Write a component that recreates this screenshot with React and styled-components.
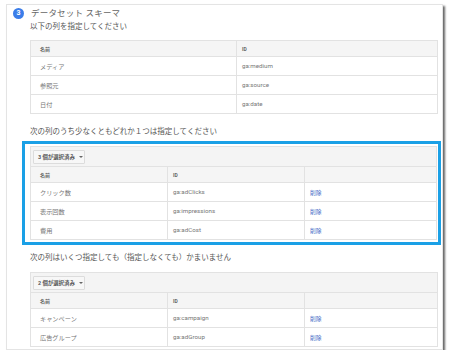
import React from "react";
import styled, { createGlobalStyle } from "styled-components";

const GlobalStyle = createGlobalStyle`
  html, body { margin: 0; padding: 0; background: #ffffff; }
  body { font-family: Roboto, "Noto Sans CJK JP", sans-serif; }
  * { box-sizing: border-box; }
`;

const Card = styled.div`
  margin: 4px 0 0 6px;
  width: 437px;
  background: #fff;
  border: 1px solid #e4e4e4;
  box-shadow: 2px 2px 2px rgba(0, 0, 0, 0.6);
  padding: 2px 4px 2px 6px;
`;

const StepHeader = styled.div`
  display: flex;
  align-items: center;
  gap: 7px;
  height: 12px;
`;

const StepBadge = styled.span`
  width: 11px;
  height: 11px;
  border-radius: 50%;
  background: #3b7de9;
  color: #fff;
  font-size: 7px;
  font-weight: 700;
  display: flex;
  align-items: center;
  justify-content: center;
  line-height: 1;
`;

const StepTitle = styled.span`
  font-size: 8.5px;
  line-height: 12px;
  color: #666;
  letter-spacing: 0.2px;
`;

const Body = styled.div`
  margin-left: 17px;
  display: flex;
  flex-direction: column;
`;

const Instruction = styled.div`
  font-size: 7.5px;
  line-height: 12px;
  color: #555;
  margin-top: ${(p) => p.$mt}px;
`;

const Table = styled.div`
  border: 1px solid #e2e2e2;
  margin-top: ${(p) => p.$mt || 0}px;
  background: #fff;
`;

const Toolbar = styled.div`
  height: 20px;
  background: #f4f4f4;
  border-bottom: 1px solid #e2e2e2;
  display: flex;
  align-items: center;
  padding-left: 2px;
`;

const SelectButton = styled.div`
  height: 14px;
  width: 52px;
  border: 1px solid #dcdcdc;
  background: #f7f7f7;
  border-radius: 1px;
  display: flex;
  align-items: center;
  padding-left: 4px;
  gap: 4px;
  font-size: 5.4px;
  font-weight: 700;
  color: #555;
`;

const Caret = styled.span`
  width: 0;
  height: 0;
  border-left: 2px solid transparent;
  border-right: 2px solid transparent;
  border-top: 2px solid #666;
`;

const Row = styled.div`
  display: grid;
  grid-template-columns: ${(p) => p.$cols};
  height: ${(p) => (p.$header ? 16 : 19)}px;
  background: ${(p) => (p.$header ? "#f5f5f5" : "#fff")};
  border-bottom: 1px solid #e2e2e2;
  &:last-child { border-bottom: none; height: ${(p) => (p.$header ? 15 : 18)}px; }
`;

const Cell = styled.div`
  display: flex;
  align-items: center;
  padding-left: ${(p) => (p.$first ? 9 : 5)}px;
  border-left: ${(p) => (p.$first ? "none" : "1px solid #e2e2e2")};
  font-size: ${(p) => (p.$header ? 5 : 6.2)}px;
  font-weight: ${(p) => (p.$header ? 700 : 400)};
  color: ${(p) => (p.$header ? "#666" : "#777")};
  white-space: nowrap;
  overflow: hidden;
`;

const DeleteLink = styled.a`
  color: #4a74c9;
  font-size: 5.8px;
  text-decoration: none;
`;

const Highlight = styled.div`
  margin: 3px -3px 0 -8px;
  border: 3px solid #1aa0e6;
  padding: 2px 1px 2px 5px;
`;

const TWO = "205px 1fr";
const THREE = "136px 137px 1fr";

const required = [
  ["メディア", "ga:medium"],
  ["参照元", "ga:source"],
  ["日付", "ga:date"],
];

const atLeastOne = [
  ["クリック数", "ga:adClicks"],
  ["表示回数", "ga:impressions"],
  ["費用", "ga:adCost"],
];

const optional = [
  ["キャンペーン", "ga:campaign"],
  ["広告グループ", "ga:adGroup"],
];

function SelectableTable({ count, rows }) {
  return (
    <Table>
      <Toolbar>
        <SelectButton>
          <span>{count} 個が選択済み</span>
          <Caret />
        </SelectButton>
      </Toolbar>
      <Row $cols={THREE} $header>
        <Cell $first $header>名前</Cell>
        <Cell $header>ID</Cell>
        <Cell $header />
      </Row>
      {rows.map(([name, id]) => (
        <Row key={id} $cols={THREE}>
          <Cell $first>{name}</Cell>
          <Cell>{id}</Cell>
          <Cell>
            <DeleteLink href="#">削除</DeleteLink>
          </Cell>
        </Row>
      ))}
    </Table>
  );
}

export default function App() {
  return (
    <>
      <GlobalStyle />
      <Card>
        <StepHeader>
          <StepBadge>3</StepBadge>
          <StepTitle>データセット スキーマ</StepTitle>
        </StepHeader>
        <Body>
          <Instruction $mt={2}>以下の列を指定してください</Instruction>
          <Table $mt={7}>
            <Row $cols={TWO} $header>
              <Cell $first $header>名前</Cell>
              <Cell $header>ID</Cell>
            </Row>
            {required.map(([name, id]) => (
              <Row key={id} $cols={TWO}>
                <Cell $first>{name}</Cell>
                <Cell>{id}</Cell>
              </Row>
            ))}
          </Table>
          <Instruction $mt={12}>
            次の列のうち少なくともどれか１つは指定してください
          </Instruction>
          <Highlight>
            <SelectableTable count={3} rows={atLeastOne} />
          </Highlight>
          <Instruction $mt={7}>
            次の列はいくつ指定しても（指定しなくても）かまいません
          </Instruction>
          <Table $mt={8}>
            <Toolbar>
              <SelectButton>
                <span>2 個が選択済み</span>
                <Caret />
              </SelectButton>
            </Toolbar>
            <Row $cols={THREE} $header>
              <Cell $first $header>名前</Cell>
              <Cell $header>ID</Cell>
              <Cell $header />
            </Row>
            {optional.map(([name, id]) => (
              <Row key={id} $cols={THREE}>
                <Cell $first>{name}</Cell>
                <Cell>{id}</Cell>
                <Cell>
                  <DeleteLink href="#">削除</DeleteLink>
                </Cell>
              </Row>
            ))}
          </Table>
        </Body>
      </Card>
    </>
  );
}
